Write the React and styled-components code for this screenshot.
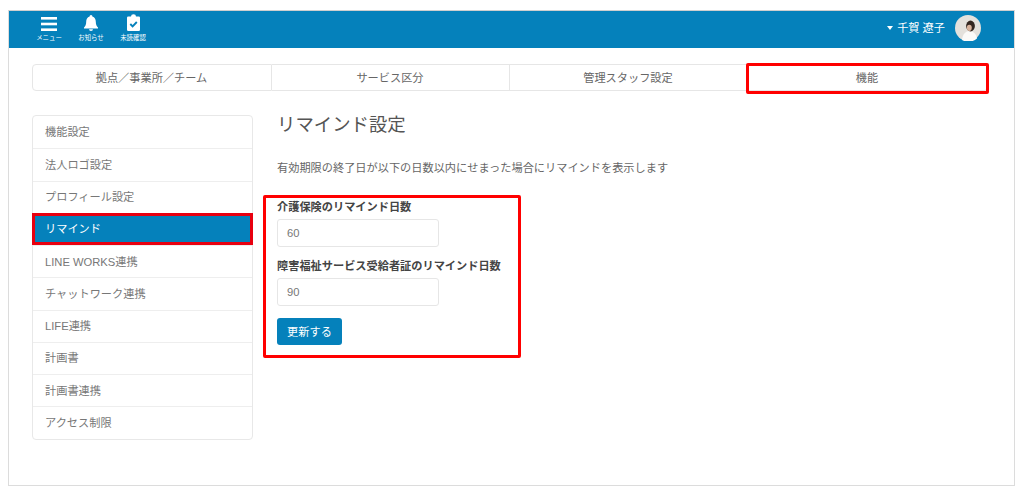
import React from 'react'
import styled, { createGlobalStyle } from 'styled-components'

const GlobalStyle = createGlobalStyle`
  html, body { margin: 0; padding: 0; background: #fff; }
  body {
    font-family: "Liberation Sans", "Noto Sans CJK JP", sans-serif;
    color: #555;
  }
  * { box-sizing: border-box; }
`

const Frame = styled.div`
  width: 1007px;
  height: 476px;
  margin: 10px 0 0 8px;
  border: 1px solid #dcdcdc;
  border-top-color: #cfcfcf;
  background: #fff;
`

const Header = styled.header`
  height: 37px;
  background: #0581bb;
  display: flex;
  align-items: flex-start;
  justify-content: space-between;
  padding: 3px 33px 0 26px;
  color: #fff;
`

const NavIcons = styled.nav`
  display: flex;
  gap: 14px;
`

const NavItem = styled.div`
  width: 28px;
  display: flex;
  flex-direction: column;
  align-items: center;
  font-size: 6.4px;
  line-height: 8px;
  white-space: nowrap;
  svg { display: block; margin-bottom: 2px; }
`

const User = styled.div`
  display: flex;
  align-items: center;
  height: 26px;
  margin-top: 1px;
  font-size: 11.2px;
`

const UserName = styled.span`
  margin-bottom: 3px;
`

const Caret = styled.span`
  width: 0;
  height: 0;
  border-left: 3.5px solid transparent;
  border-right: 3.5px solid transparent;
  border-top: 4px solid #fff;
  margin-right: 4px;
`

const Avatar = styled.svg`
  width: 26px;
  height: 26px;
  margin-left: 10px;
  display: block;
`

const Content = styled.div`
  padding: 16px 26px 0 23px;
`

const Tabs = styled.div`
  display: grid;
  grid-template-columns: 240px 238px 238px 240px;
  height: 27px;
`

const Tab = styled.div`
  position: relative;
  display: flex;
  align-items: center;
  justify-content: center;
  padding: 0 1px 2px 0;
  font-size: 11.2px;
  color: #666;
  border: 1px solid #e6e6e6;
  border-left: none;
  &:first-child { border-left: 1px solid #e6e6e6; border-radius: 4px 0 0 4px; }
  &:last-child { border-radius: 0 4px 4px 0; }
  ${p => p.$marked && `
    &::after {
      content: '';
      position: absolute;
      top: -2px;
      bottom: -4px;
      left: -2px;
      right: -2px;
      border: 3px solid #f00;
      border-radius: 2px;
    }
  `}
`

const Columns = styled.div`
  display: flex;
  margin-top: 24px;
`

const SideMenu = styled.ul`
  list-style: none;
  margin: 0;
  padding: 0;
  width: 221px;
  border: 1px solid #e8e8e8;
  border-radius: 4px;
  flex-shrink: 0;
  align-self: flex-start;
`

const SideItem = styled.li`
  height: 32.25px;
  display: flex;
  align-items: center;
  padding: 0 0 2px 12px;
  font-size: 11.2px;
  color: #777;
  border-top: 1px solid #eee;
  &:first-child { border-top: none; padding-bottom: 3px; }
  ${p => p.$active && `
    position: relative;
    background: #0581bb;
    color: #fff;
    border-top: none;
    margin: 0 -1px;
    padding-left: 13px;
    box-shadow: inset 0 0 0 3px #e8000f;
  `}
`

const Main = styled.main`
  margin-left: 10px;
  flex: 1;
`

const Title = styled.h1`
  margin: 0 0 0 14px;
  font-size: 18.4px;
  line-height: 20px;
  font-weight: 400;
  color: #555;
`

const Lead = styled.p`
  margin: 25px 0 0 14px;
  font-size: 11.2px;
  line-height: 17px;
  color: #666;
`

const FormBox = styled.form`
  width: 258px;
  height: 163px;
  margin-top: 18px;
  border: 3px solid #f00;
  border-radius: 2px;
  padding: 1px 0 0 11px;
`

const Label = styled.label`
  display: block;
  font-size: 11.2px;
  line-height: 16px;
  font-weight: 700;
  color: #444;
  white-space: nowrap;
`

const Field = styled.div`
  margin-bottom: 11px;
`

const Input = styled.input`
  display: block;
  width: 162px;
  height: 28px;
  margin-top: 4px;
  padding: 0 9px;
  border: 1px solid #e6e6e6;
  border-radius: 3px;
  font: inherit;
  font-size: 11.2px;
  color: #777;
  background: #fff;
`

const Button = styled.button`
  display: block;
  width: 65px;
  height: 27px;
  margin-top: 12px;
  padding: 0 0 2px;
  border: none;
  border-radius: 3px;
  background: #0581bb;
  color: #fff;
  font: inherit;
  font-size: 11.2px;
`

const tabs = ['拠点／事業所／チーム', 'サービス区分', '管理スタッフ設定', '機能']
const menu = ['機能設定', '法人ロゴ設定', 'プロフィール設定', 'リマインド', 'LINE WORKS連携', 'チャットワーク連携', 'LIFE連携', '計画書', '計画書連携', 'アクセス制限']

export default function App() {
  return (
    <>
      <GlobalStyle />
      <Frame>
        <Header>
          <NavIcons>
            <NavItem>
              <svg width="16" height="18" viewBox="0 0 16 18" fill="#fff">
                <rect y="3" width="16" height="2.6" />
                <rect y="8.700" width="16" height="2.6" />
                <rect y="14.400" width="16" height="2.6" />
              </svg>
              メニュー
            </NavItem>
            <NavItem>
              <svg width="16" height="18" viewBox="0 0 16 18" fill="#fff">
                <path d="M8 1a1.400 1.400 0 0 1 1.400 1.500C11.700 3.100 12.800 5.200 12.800 7.800c0 3.100.9 4.500 2.200 5.700v.9H1v-.9c1.300-1.200 2.200-2.600 2.200-5.700C3.200 5.200 4.300 3.100 6.600 2.500A1.400 1.400 0 0 1 8 1z" />
                <path d="M6 15.200h4a2 1.700 0 0 1-4 0z" />
              </svg>
              お知らせ
            </NavItem>
            <NavItem>
              <svg width="13" height="18" viewBox="0 0 13 18">
                <path fill="#fff" d="M1.200 2.500H4a2.500 2.300 0 0 1 5 0h2.800A1.200 1.200 0 0 1 13 3.700V15.800A1.200 1.200 0 0 1 11.800 17H1.200A1.200 1.200 0 0 1 0 15.800V3.700A1.200 1.200 0 0 1 1.200 2.500z" />
                <path fill="none" stroke="#0581bb" strokeWidth="1.900" d="M3.300 10l2.300 2.300L9.800 8" />
              </svg>
              未読確認
            </NavItem>
          </NavIcons>
          <User>
            <Caret />
            <UserName>千賀 遼子</UserName>
            <Avatar viewBox="0 0 26 26">
              <circle cx="13" cy="13" r="13" fill="#e4e1dc" />
              <path d="M7 25c.5-6 4-9 7.500-9s7 3 7.500 7.500A13 13 0 0 1 7 25z" fill="#fbfaf8" />
              <ellipse cx="15.500" cy="11" rx="4.400" ry="5.400" fill="#33261f" />
              <ellipse cx="14.300" cy="12.800" rx="2.500" ry="3.100" fill="#d9b39c" />
            </Avatar>
          </User>
        </Header>
        <Content>
          <Tabs>
            {tabs.map((t, i) => <Tab key={t} $marked={i === 3}>{t}</Tab>)}
          </Tabs>
          <Columns>
            <SideMenu>
              {menu.map(m => <SideItem key={m} $active={m === 'リマインド'}>{m}</SideItem>)}
            </SideMenu>
            <Main>
              <Title>リマインド設定</Title>
              <Lead>有効期限の終了日が以下の日数以内にせまった場合にリマインドを表示します</Lead>
              <FormBox onSubmit={e => e.preventDefault()}>
                <Field>
                  <Label>介護保険のリマインド日数</Label>
                  <Input defaultValue="60" />
                </Field>
                <Field>
                  <Label>障害福祉サービス受給者証のリマインド日数</Label>
                  <Input defaultValue="90" />
                </Field>
                <Button>更新する</Button>
              </FormBox>
            </Main>
          </Columns>
        </Content>
      </Frame>
    </>
  )
}
